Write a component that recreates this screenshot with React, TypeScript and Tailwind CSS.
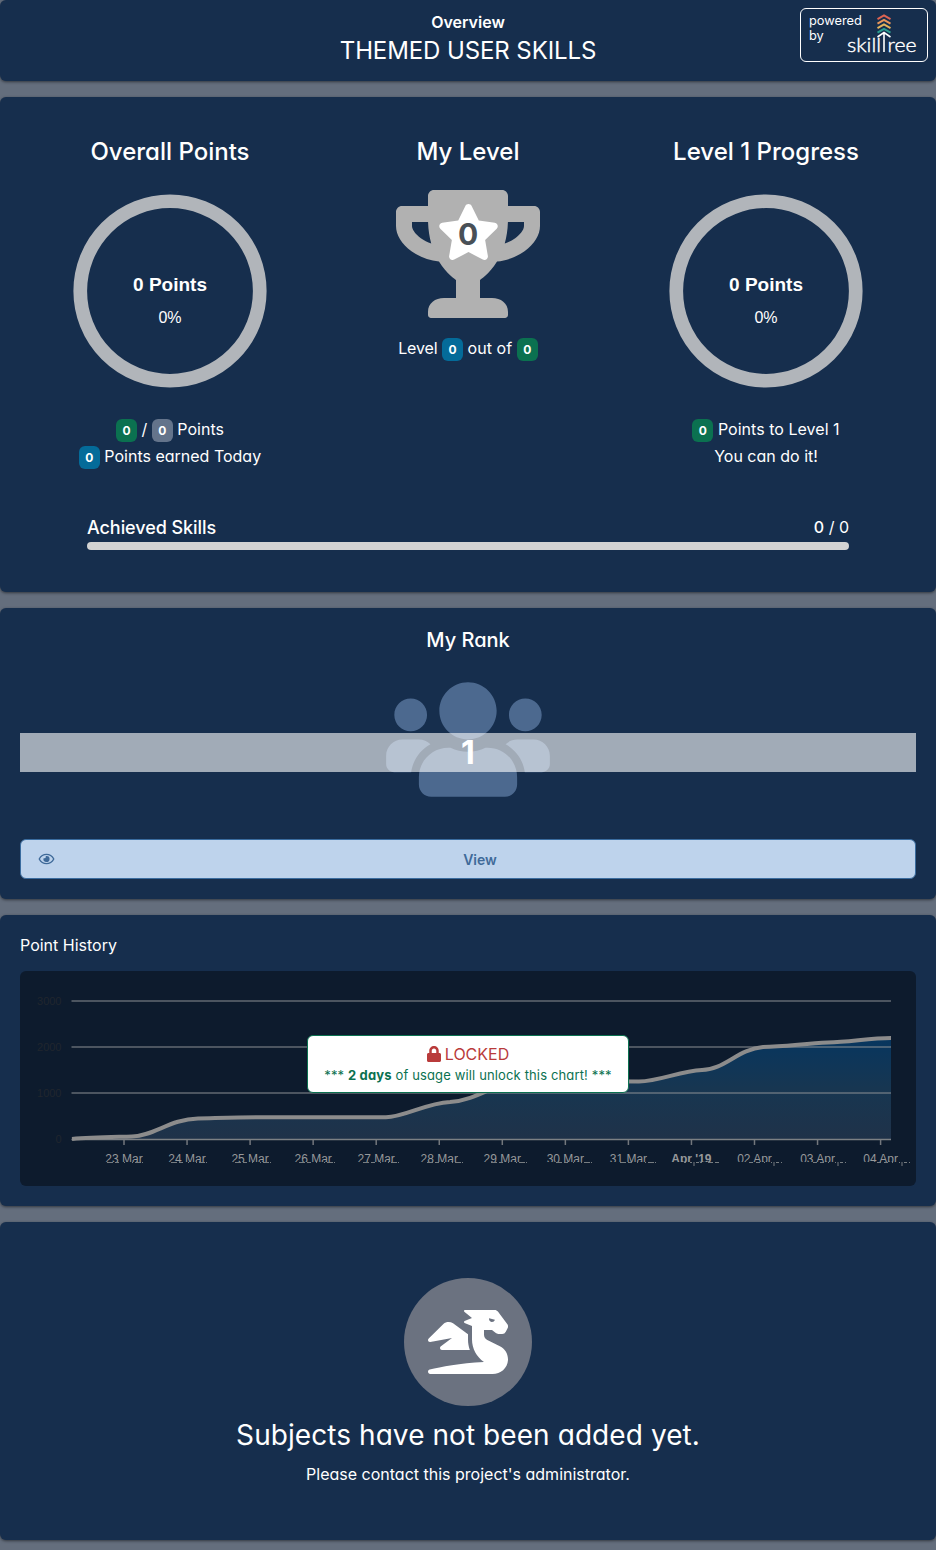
import React from "react";
import { FaTrophy, FaStar, FaUsers, FaRegEye, FaLock, FaDragon } from "react-icons/fa";

const card = "rounded-md bg-[#162e4d] shadow-[0_1px_3px_rgba(0,0,0,0.5)]";

function Badge({ color }: { color: string }) {
  return (
    <span className={`inline-flex h-[23px] w-[21px] items-center justify-center rounded-md align-middle text-xs font-bold text-white ${color}`}>
      0
    </span>
  );
}

function Ring() {
  return (
    <div className="relative h-[194px] w-[194px] pt-[80px] text-center font-['Liberation_Sans',sans-serif] text-white">
      <svg className="absolute inset-0" width="194" height="194" viewBox="0 0 194 194" fill="none">
        <circle cx="97" cy="97" r="89.750" stroke="#b1b5ba" strokeWidth="13.700" />
      </svg>
      <div className="text-[19px] leading-[22px] font-bold">0 Points</div>
      <div className="mt-[11px] text-base leading-[22px]">0%</div>
    </div>
  );
}

const labels = ["23 Mar", "24 Mar", "25 Mar", "26 Mar", "27 Mar", "28 Mar", "29 Mar", "30 Mar", "31 Mar", "Apr '19", "02 Apr", "03 Apr", "04 Apr"];
const curve =
  "M52 168 C72 166 96 166 112 165.5 C134 165 150 148 178 147.5 C200 147 220 146.300 240 146.300 L366 146.300 C384 146.300 406 132 430 131 C455 129 470 116 493 110 C530 110 580 110.500 619 110.500 C640 110 660 100 682 99 C704 99 718 78 743 76 C765 75.500 785 72.500 808 71.500 C830 71 850 67 871 67";

// Baseline marks under each axis label, relative to the label's left edge.
function labelMarks(label: string) {
  if (label.startsWith("Apr")) return "M0 191.500h2M6 191.500h2M10 191v4M12 191.500h3M16 191.500h2M24 191.500h5M31 191.500h4";
  if (label.endsWith("Apr")) return "M1 191.500h4M8 191.500h4M16 191.500h1M23 191.500h1M26 191v4M28 191.500h3M33 191.500h1";
  return "M0 191.500h6M8 191.500h4M17 191.500h1M25 191.500h1M28 191.500h6M35 191.500h1";
}

function Chart() {
  return (
    <svg className="block" width="896" height="215" viewBox="0 0 896 215" fontFamily="Liberation Sans, sans-serif">
      <defs>
        <linearGradient id="area" x1="0" y1="0" x2="0" y2="1">
          <stop offset="0" stopColor="#07365f" />
          <stop offset="0.500" stopColor="#173651" />
          <stop offset="1" stopColor="#1f3249" />
        </linearGradient>
        <clipPath id="upper"><rect x="0" y="175" width="896" height="16" /></clipPath>
      </defs>
      <path d={`${curve} L871 168 L52 168 Z`} fill="url(#area)" />
      {[30, 76, 122].map((y) => (
        <path key={y} d={`M51.500 ${y}H871`} stroke="#8c8f94" strokeOpacity="0.500" strokeWidth="2" />
      ))}
      <path d="M51.500 168.500H871" stroke="#7c8084" strokeWidth="1.500" />
      {["3000", "2000", "1000", "0"].map((t, i) => (
        <text key={t} x="41.500" y={34 + i * 46} textAnchor="end" fontSize="11" fill="#20262d">{t}</text>
      ))}
      <path d={curve} fill="none" stroke="#8c8c8c" strokeWidth="4" />
      {labels.map((t, i) => (
        <g key={t}>
          <path d={`M${104 + i * 63.05} 169v5`} stroke="#73777c" strokeWidth="1.500" />
          <text x={104 + i * 63.05} y="192" textAnchor="middle" fontSize="12" fontWeight={t === "Apr '19" ? 700 : 400} fill="#96989a" clipPath="url(#upper)">{t}</text>
          <path d={labelMarks(t)} transform={`translate(${Math.round(86.5 + i * 64.15)} 0)`} stroke="#8b8e91" strokeOpacity="0.850" fill="none" />
        </g>
      ))}
    </svg>
  );
}

function Logo() {
  return (
    <svg className="absolute top-[5px] left-[46px]" width="72" height="42" viewBox="0 0 72 42" fill="none">
      {["#dc6352", "#e8955a", "#e3b45c", "#2a9d8f"].map((c, i) => (
        <path key={c} d={`M30.500 ${5.2 + i * 4.5}L37 ${1.5 + i * 4.5}L43.500 ${5.2 + i * 4.5}`} stroke={c} strokeWidth="2" />
      ))}
      <path d="M30.500 23L37 18.500L43.500 23M37 19V38" stroke="#fff" strokeWidth="1.600" />
      <g fill="#fff" fontFamily="Lato, sans-serif" fontSize="19.500" fontWeight="300" stroke="#fff" strokeWidth="0.400">
        <text x="0" y="37.500" textLength="34" lengthAdjust="spacingAndGlyphs">skill</text>
        <text x="40.500" y="37.500" textLength="29" lengthAdjust="spacingAndGlyphs">ree</text>
      </g>
    </svg>
  );
}

export default function App() {
  return (
    <div className="flex h-[1550px] w-[936px] flex-col gap-4 bg-[#646e7d] font-['Inter',sans-serif] text-base text-white [font-feature-settings:'cv02','cv03','cv04','cv11']">
      <header className={`${card} relative h-[81px] pt-[10px] text-center`}>
        <div className="leading-6 font-semibold">Overview</div>
        <h1 className="mt-px text-2xl leading-8 tracking-[-0.1px]">THEMED USER SKILLS</h1>
        <div className="absolute top-2 right-2 h-[54px] w-[128px] rounded-md border border-white">
          <div className="pt-1 pl-2 text-left text-[12.800px] leading-[15px]">powered<br />by</div>
          <Logo />
        </div>
      </header>

      <section className={`${card} h-[495px] px-[21px] pt-[37px]`}>
        <div className="grid grid-cols-3">
          <div className="flex flex-col items-center">
            <h2 className="text-2xl leading-9 font-medium">Overall Points</h2>
            <div className="mt-6"><Ring /></div>
            <div className="mt-[28px] text-center leading-[27px]">
              <div><Badge color="bg-[#0b7150]" /> / <Badge color="bg-[#64748b]" /> Points</div>
              <div><Badge color="bg-[#046b99]" /> Points earned Today</div>
            </div>
          </div>
          <div className="flex flex-col items-center">
            <h2 className="text-2xl leading-9 font-medium">My Level</h2>
            <div className="relative mt-5 h-32 w-36">
              <FaTrophy className="h-32 w-36 text-[#b1b1b1]" />
              <FaStar className="absolute top-[14px] left-[41px] h-[56px] w-[63px]" />
              <span className="absolute top-[26px] left-0 w-full text-center text-[30px] leading-9 font-bold text-[#495057]">0</span>
            </div>
            <div className="mt-[17px] leading-[27px]"><span className="tracking-[-0.1px]">Level </span><Badge color="bg-[#046b99]" /><span className="tracking-[0.07px]"> out of </span><Badge color="bg-[#0b7150]" /></div>
          </div>
          <div className="flex flex-col items-center">
            <h2 className="text-2xl leading-9 font-medium">Level 1 Progress</h2>
            <div className="mt-6"><Ring /></div>
            <div className="mt-[28px] text-center leading-[27px]">
              <div className="tracking-[0.03px]"><Badge color="bg-[#0b7150]" /> Points to Level 1</div>
              <div>You can do it!</div>
            </div>
          </div>
        </div>
        <div className="mx-[66px] mt-[44px]">
          <div className="flex justify-between leading-[27px]">
            <span className="text-lg leading-[27px] font-medium tracking-[-0.07px]">Achieved Skills</span>
            <span><b className="font-medium">0</b> / 0</span>
          </div>
          <div className="mt-px h-2 rounded-md bg-[#d3d3d3]" />
        </div>
      </section>

      <section className={`${card} h-[291px] px-5 pt-[17px]`}>
        <h2 className="text-center text-xl leading-[30px] font-medium">My Rank</h2>
        <div className="relative mt-[19px] h-[131px]">
          <FaUsers className="mx-auto h-[131px] w-[164px] text-[#4c698f]" />
          <div className="absolute top-[59px] left-0 h-[39px] w-full bg-white/60 text-center text-[32px] leading-[39px] font-bold">1</div>
        </div>
        <button className="relative mt-[34px] block h-10 w-full rounded-md border border-[#3a6c9f] bg-[#bed3ec] pt-[2px] pl-6 text-sm font-semibold text-[#3f6a99]">
          <FaRegEye className="absolute top-[12px] left-[17px] h-[14px] w-[17px]" />
          View
        </button>
      </section>

      <section className={`${card} h-[291px] px-5 pt-[17px]`}>
        <h2 className="leading-[27px]">Point History</h2>
        <div className="relative mt-3 h-[215px] overflow-hidden rounded-md bg-[#0d1b2d]">
          <Chart />
          <div className="absolute top-[64px] left-[287px] h-[58px] w-[322px] rounded-md border border-[#0b7150] bg-white pt-[6px] text-center">
            <div className="flex items-center justify-center gap-1 leading-6 text-[#b93b3b]"><FaLock className="h-4 w-[14px]" />LOCKED</div>
            <div className="text-[13px] leading-[19px] tracking-[0.14px] text-[#0b7150]">*** <b>2 days</b> of usage will unlock this chart! ***</div>
          </div>
        </div>
      </section>

      <section className={`${card} flex h-[318px] flex-col items-center pt-14`}>
        <div className="flex h-32 w-32 items-center justify-center rounded-full bg-[#6b7280]"><FaDragon className="h-16 w-20" /></div>
        <div className="mt-[9px] text-[28px] leading-10 tracking-[0.07px]">Subjects have not been added yet.</div>
        <div className="mt-[7px] leading-6">Please contact this project's administrator.</div>
      </section>
    </div>
  );
}
